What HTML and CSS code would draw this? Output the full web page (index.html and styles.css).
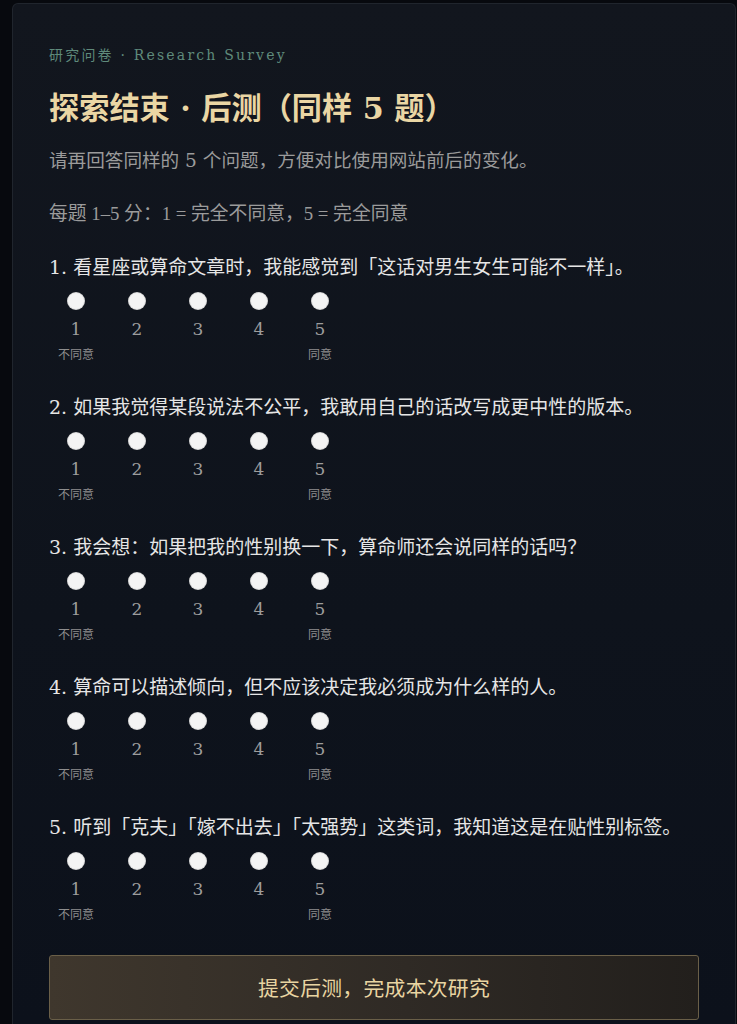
FILE: index.html
```html
<!DOCTYPE html>
<html lang="zh-CN">
<head>
<meta charset="utf-8">
<title>研究问卷 · 后测</title>
<link rel="stylesheet" href="styles.css">
</head>
<body>
<main class="card">
  <div class="eyebrow">研究问卷 · Research Survey</div>
  <h1 class="title">探索结束 · 后测（同样 5 题）</h1>
  <p class="subtitle">请再回答同样的 5 个问题，方便对比使用网站前后的变化。</p>
  <p class="scale">每题 1–5 分：1 = 完全不同意，5 = 完全同意</p>

  <section class="question">
    <p class="q-text">1. 看星座或算命文章时，我能感觉到「这话对男生女生可能不一样」。</p>
    <div class="options">
      <label class="opt"><span class="dot"></span><span class="num">1</span><span class="hint">不同意</span></label>
      <label class="opt"><span class="dot"></span><span class="num">2</span></label>
      <label class="opt"><span class="dot"></span><span class="num">3</span></label>
      <label class="opt"><span class="dot"></span><span class="num">4</span></label>
      <label class="opt"><span class="dot"></span><span class="num">5</span><span class="hint">同意</span></label>
    </div>
  </section>

  <section class="question">
    <p class="q-text">2. 如果我觉得某段说法不公平，我敢用自己的话改写成更中性的版本。</p>
    <div class="options">
      <label class="opt"><span class="dot"></span><span class="num">1</span><span class="hint">不同意</span></label>
      <label class="opt"><span class="dot"></span><span class="num">2</span></label>
      <label class="opt"><span class="dot"></span><span class="num">3</span></label>
      <label class="opt"><span class="dot"></span><span class="num">4</span></label>
      <label class="opt"><span class="dot"></span><span class="num">5</span><span class="hint">同意</span></label>
    </div>
  </section>

  <section class="question">
    <p class="q-text">3. 我会想：如果把我的性别换一下，算命师还会说同样的话吗？</p>
    <div class="options">
      <label class="opt"><span class="dot"></span><span class="num">1</span><span class="hint">不同意</span></label>
      <label class="opt"><span class="dot"></span><span class="num">2</span></label>
      <label class="opt"><span class="dot"></span><span class="num">3</span></label>
      <label class="opt"><span class="dot"></span><span class="num">4</span></label>
      <label class="opt"><span class="dot"></span><span class="num">5</span><span class="hint">同意</span></label>
    </div>
  </section>

  <section class="question">
    <p class="q-text">4. 算命可以描述倾向，但不应该决定我必须成为什么样的人。</p>
    <div class="options">
      <label class="opt"><span class="dot"></span><span class="num">1</span><span class="hint">不同意</span></label>
      <label class="opt"><span class="dot"></span><span class="num">2</span></label>
      <label class="opt"><span class="dot"></span><span class="num">3</span></label>
      <label class="opt"><span class="dot"></span><span class="num">4</span></label>
      <label class="opt"><span class="dot"></span><span class="num">5</span><span class="hint">同意</span></label>
    </div>
  </section>

  <section class="question">
    <p class="q-text">5. 听到「克夫」「嫁不出去」「太强势」这类词，我知道这是在贴性别标签。</p>
    <div class="options">
      <label class="opt"><span class="dot"></span><span class="num">1</span><span class="hint">不同意</span></label>
      <label class="opt"><span class="dot"></span><span class="num">2</span></label>
      <label class="opt"><span class="dot"></span><span class="num">3</span></label>
      <label class="opt"><span class="dot"></span><span class="num">4</span></label>
      <label class="opt"><span class="dot"></span><span class="num">5</span><span class="hint">同意</span></label>
    </div>
  </section>

  <button class="submit" type="button">提交后测，完成本次研究</button>
</main>
</body>
</html>
```

FILE: styles.css
```css
html, body {
  margin: 0;
  padding: 0;
  background: #07090e;
}

body {
  font-family: "DejaVu Serif", "Noto Sans CJK SC", serif;
  color: #e2e2e2;
}

.card {
  margin: 3px 1px 0 12px;
  border: 1px solid #20252d;
  border-bottom: none;
  border-radius: 6px 6px 0 0;
  background: linear-gradient(180deg, #12161e 0%, #0e131c 60%, #0c111b 100%);
  padding: 41px 36px 4px 36px;
  min-height: 1017px;
  box-sizing: border-box;
}

.eyebrow {
  font-size: 14px;
  line-height: 20px;
  letter-spacing: 2.2px;
  color: #5f8a7b;
}

.title {
  margin: 24px 0 0;
  font-size: 30.2px;
  line-height: 40px;
  font-weight: 700;
  color: #ead6a4;
}

.subtitle {
  margin: 18px 0 0;
  font-size: 18.6px;
  line-height: 28px;
  color: #9b9b9b;
}

.scale {
  margin: 25px 0 0;
  font-family: "Liberation Serif", "Noto Sans CJK SC", serif;
  font-size: 18.8px;
  line-height: 28px;
  color: #9b9b9b;
}

.question {
  margin-top: 25px;
}

.question + .question {
  margin-top: 31px;
}

.q-text {
  margin: 0;
  font-size: 19px;
  line-height: 28px;
  color: #e6e6e6;
}

.options {
  margin-top: 12px;
  display: grid;
  grid-template-columns: repeat(5, 54px);
  column-gap: 7px;
}

.opt {
  display: flex;
  flex-direction: column;
  align-items: center;
}

.dot {
  width: 16px;
  height: 16px;
  border-radius: 50%;
  background: #f4f4f4;
  box-shadow: 0 0 0 1px #d8d8d8;
}

.num {
  margin-top: 9px;
  font-size: 17px;
  line-height: 22px;
  color: #9d9d9d;
}

.hint {
  margin-top: 6px;
  font-family: "Noto Sans CJK SC", sans-serif;
  font-size: 12px;
  line-height: 16px;
  color: #8e8e8e;
}

.opt:not(:first-child):not(:last-child)::after {
  content: "";
  display: block;
  height: 22px;
}

.submit {
  display: block;
  width: 100%;
  margin-top: 33px;
  height: 65px;
  padding: 0 0 2px;
  border: 1px solid #6a5f48;
  border-radius: 3px;
  background: linear-gradient(90deg, #3f372d 0%, #2f2a25 55%, #221f1c 100%);
  color: #e9d5a2;
  font-family: "DejaVu Serif", "Noto Sans CJK SC", serif;
  font-size: 20.8px;
  letter-spacing: 0.3px;
  cursor: pointer;
}
```
